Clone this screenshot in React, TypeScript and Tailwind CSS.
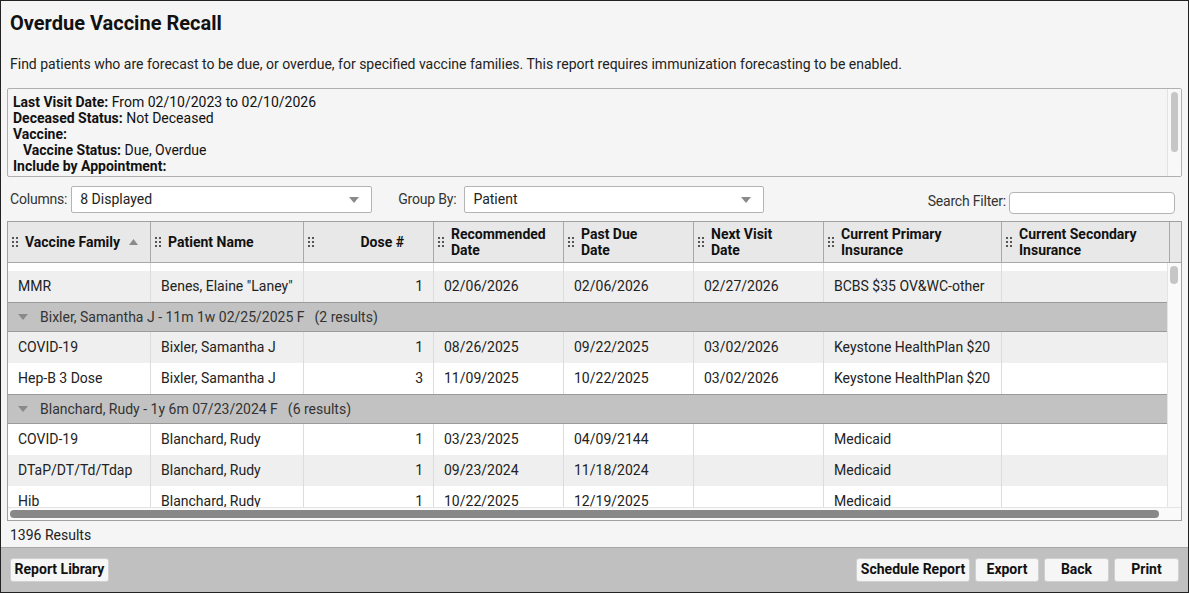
import React from "react";

type Row = { family: string; patient: string; dose: string; rec: string; past: string; next: string; primary: string; secondary: string };
type Item = { kind: "row"; row: Row; alt: boolean } | { kind: "group"; label: string; count: string } | { kind: "blank" };

const widths = [143, 153, 130, 130, 130, 130, 178, 168];

const headers: { lines: string[]; right?: boolean; sort?: boolean }[] = [
  { lines: ["Vaccine Family"], sort: true },
  { lines: ["Patient Name"] },
  { lines: ["Dose #"], right: true },
  { lines: ["Recommended", "Date"] },
  { lines: ["Past Due", "Date"] },
  { lines: ["Next Visit", "Date"] },
  { lines: ["Current Primary", "Insurance"] },
  { lines: ["Current Secondary", "Insurance"] },
];

const items: Item[] = [
  { kind: "blank" },
  {
    kind: "row",
    alt: true,
    row: { family: "MMR", patient: 'Benes, Elaine "Laney"', dose: "1", rec: "02/06/2026", past: "02/06/2026", next: "02/27/2026", primary: "BCBS $35 OV&WC-other", secondary: "" },
  },
  { kind: "group", label: "Bixler, Samantha J - 11m 1w 02/25/2025 F", count: "(2 results)" },
  {
    kind: "row",
    alt: true,
    row: { family: "COVID-19", patient: "Bixler, Samantha J", dose: "1", rec: "08/26/2025", past: "09/22/2025", next: "03/02/2026", primary: "Keystone HealthPlan $20", secondary: "" },
  },
  {
    kind: "row",
    alt: false,
    row: { family: "Hep-B 3 Dose", patient: "Bixler, Samantha J", dose: "3", rec: "11/09/2025", past: "10/22/2025", next: "03/02/2026", primary: "Keystone HealthPlan $20", secondary: "" },
  },
  { kind: "group", label: "Blanchard, Rudy - 1y 6m 07/23/2024 F", count: "(6 results)" },
  {
    kind: "row",
    alt: false,
    row: { family: "COVID-19", patient: "Blanchard, Rudy", dose: "1", rec: "03/23/2025", past: "04/09/2144", next: "", primary: "Medicaid", secondary: "" },
  },
  {
    kind: "row",
    alt: true,
    row: { family: "DTaP/DT/Td/Tdap", patient: "Blanchard, Rudy", dose: "1", rec: "09/23/2024", past: "11/18/2024", next: "", primary: "Medicaid", secondary: "" },
  },
  {
    kind: "row",
    alt: false,
    row: { family: "Hib", patient: "Blanchard, Rudy", dose: "1", rec: "10/22/2025", past: "12/19/2025", next: "", primary: "Medicaid", secondary: "" },
  },
];

const Grip = () => (
  <svg width="7" height="10" viewBox="0 0 7 10" className="shrink-0">
    {[0, 4].map((x) =>
      [0, 4, 8].map((y) => <rect key={`${x}-${y}`} x={x} y={y} width="2" height="2" fill="#555" />)
    )}
  </svg>
);

const Caret = () => (
  <svg width="10" height="6" viewBox="0 0 10 6">
    <path d="M0 0 L10 0 L5 6 Z" fill="#8a8a8a" />
  </svg>
);

const Select = ({ value, width }: { value: string; width: string }) => (
  <div className={`${width} h-[27px] bg-white border border-[#b4b4b4] rounded-[2px] flex items-center pl-[8px] pr-[12px] text-[14px] text-[#222]`}>
    <span className="flex-1">{value}</span>
    <Caret />
  </div>
);

const Button = ({ label, w }: { label: string; w: string }) => (
  <button className={`${w} h-[24px] bg-[#f6f6f6] border border-[#d0d0d0] rounded-[3px] text-[14px] font-bold text-[#111] flex items-center justify-center`}>
    {label}
  </button>
);

export default function App() {
  return (
    <div className="w-[1189px] h-[593px] border border-[#222] bg-[#f5f5f5] flex flex-col overflow-hidden text-[#222] font-['Roboto',sans-serif]">
      <div className="h-[43px] shrink-0 flex items-center px-[9px] text-[20px] font-bold text-[#111]">Overdue Vaccine Recall</div>
      <div className="h-[40px] shrink-0 flex items-center px-[9px] text-[14px]">
        Find patients who are forecast to be due, or overdue, for specified vaccine families. This report requires immunization forecasting to be enabled.
      </div>

      <div className="mt-[4px] mx-[6px] h-[89px] shrink-0 border border-[#b0b0b0] rounded-[2px] flex">
        <div className="flex-1 px-[5px] pt-[5px] text-[14px] leading-[16px] text-[#111]">
          <div><b>Last Visit Date:</b> From 02/10/2023 to 02/10/2026</div>
          <div><b>Deceased Status:</b> Not Deceased</div>
          <div><b>Vaccine:</b></div>
          <div className="pl-[10px]"><b>Vaccine Status:</b> Due, Overdue</div>
          <div><b>Include by Appointment:</b></div>
        </div>
        <div className="w-[14px] border-l border-[#e2e2e2] bg-[#f8f8f8] pt-[3px] px-[3px]">
          <div className="h-[60px] rounded-full bg-[#c6c6c6]" />
        </div>
      </div>

      <div className="mt-[8px] ml-[9px] mr-[13px] h-[28px] shrink-0 flex items-end text-[14px] text-[#333]">
        <span className="mr-[4px] self-center tracking-[-0.2px]">Columns:</span>
        <Select value="8 Displayed" width="w-[301px]" />
        <span className="ml-[26px] mr-[8px] self-center tracking-[-0.2px]">Group By:</span>
        <Select value="Patient" width="w-[300px]" />
        <div className="flex-1" />
        <span className="mr-[3px] self-end mb-[1px] tracking-[-0.2px]">Search Filter:</span>
        <div className="w-[166px] h-[22px] bg-white border border-[#b4b4b4] rounded-[4px] -mb-[1px]" />
      </div>

      <div className="mt-[8px] mx-[6px] h-[300px] shrink-0 border border-[#a0a0a0] flex flex-col bg-white">
        <div className="h-[41px] shrink-0 flex bg-[#e8e8e8] border-b border-[#a8a8a8]">
          {headers.map((h, i) => (
            <div
              key={i}
              style={{ width: widths[i] }}
              className={`shrink-0 border-r border-[#a8a8a8] flex items-center pl-[4px] gap-[6px] text-[14px] font-bold leading-[16px] text-[#111] ${h.right ? "pr-[29px]" : ""}`}
            >
              <Grip />
              <div className={`flex items-center ${h.right ? "flex-1 justify-end" : ""}`}>
                <div>
                  {h.lines.map((l) => (
                    <div key={l}>{l}</div>
                  ))}
                </div>
                {h.sort && (
                  <svg width="9" height="6" viewBox="0 0 9 6" className="ml-[9px]">
                    <path d="M0 6 L9 6 L4.5 0 Z" fill="#8a8a8a" />
                  </svg>
                )}
              </div>
            </div>
          ))}
          <div className="flex-1" />
        </div>

        <div className="h-[244px] shrink-0 flex">
          <div className="flex-1 overflow-hidden">
            {items.map((it, idx) => {
              if (it.kind === "blank") {
                return (
                  <div key={idx} className="h-[8px] flex">
                    {widths.map((w, i) => (
                      <div key={i} style={{ width: w }} className="shrink-0 border-r border-[#dcdcdc]" />
                    ))}
                  </div>
                );
              }
              if (it.kind === "group") {
                return (
                  <div key={idx} className="h-[30px] bg-[#c2c2c2] border-y border-[#9a9a9a] flex items-center pl-[10px] text-[14px] text-[#333] w-[1162px]">
                    <Caret />
                    <span className="ml-[12px]">{it.label}</span>
                    <span className="ml-[10px]">{it.count}</span>
                  </div>
                );
              }
              const r = it.row;
              const cells = [r.family, r.patient, r.dose, r.rec, r.past, r.next, r.primary, r.secondary];
              return (
                <div key={idx} className={`h-[31px] flex text-[14px] text-[#222] ${it.alt ? "bg-[#efefef]" : "bg-white"}`}>
                  {cells.map((c, i) => (
                    <div
                      key={i}
                      style={{ width: widths[i] }}
                      className={`shrink-0 border-r border-[#dcdcdc] flex items-center px-[10px] whitespace-nowrap overflow-hidden ${i === 2 ? "justify-end" : ""}`}
                    >
                      {c}
                    </div>
                  ))}
                </div>
              );
            })}
          </div>
          <div className="w-[14px] shrink-0 bg-[#fafafa] border-l border-[#e4e4e4] pt-[3px] pl-[2px] pr-[3px]">
            <div className="h-[18px] rounded-full bg-[#c6c6c6]" />
          </div>
        </div>

        <div className="h-[13px] shrink-0 bg-[#fafafa] border-t border-[#e4e4e4] pt-[2px] pl-[2px] pr-[22px]">
          <div className="h-[8px] rounded-full bg-[#888]" />
        </div>
      </div>

      <div className="h-[26px] shrink-0 flex items-center px-[9px] pt-[3px] text-[14px] text-[#222]">1396 Results</div>

      <div className="flex-1 bg-[#c0c0c0] border-t border-[#a8a8a8] flex items-center px-[9px] pb-[1px] gap-[5px]">
        <Button label="Report Library" w="w-[99px]" />
        <div className="flex-1" />
        <Button label="Schedule Report" w="w-[114px]" />
        <Button label="Export" w="w-[64px]" />
        <Button label="Back" w="w-[65px]" />
        <Button label="Print" w="w-[65px]" />
      </div>
    </div>
  );
}
